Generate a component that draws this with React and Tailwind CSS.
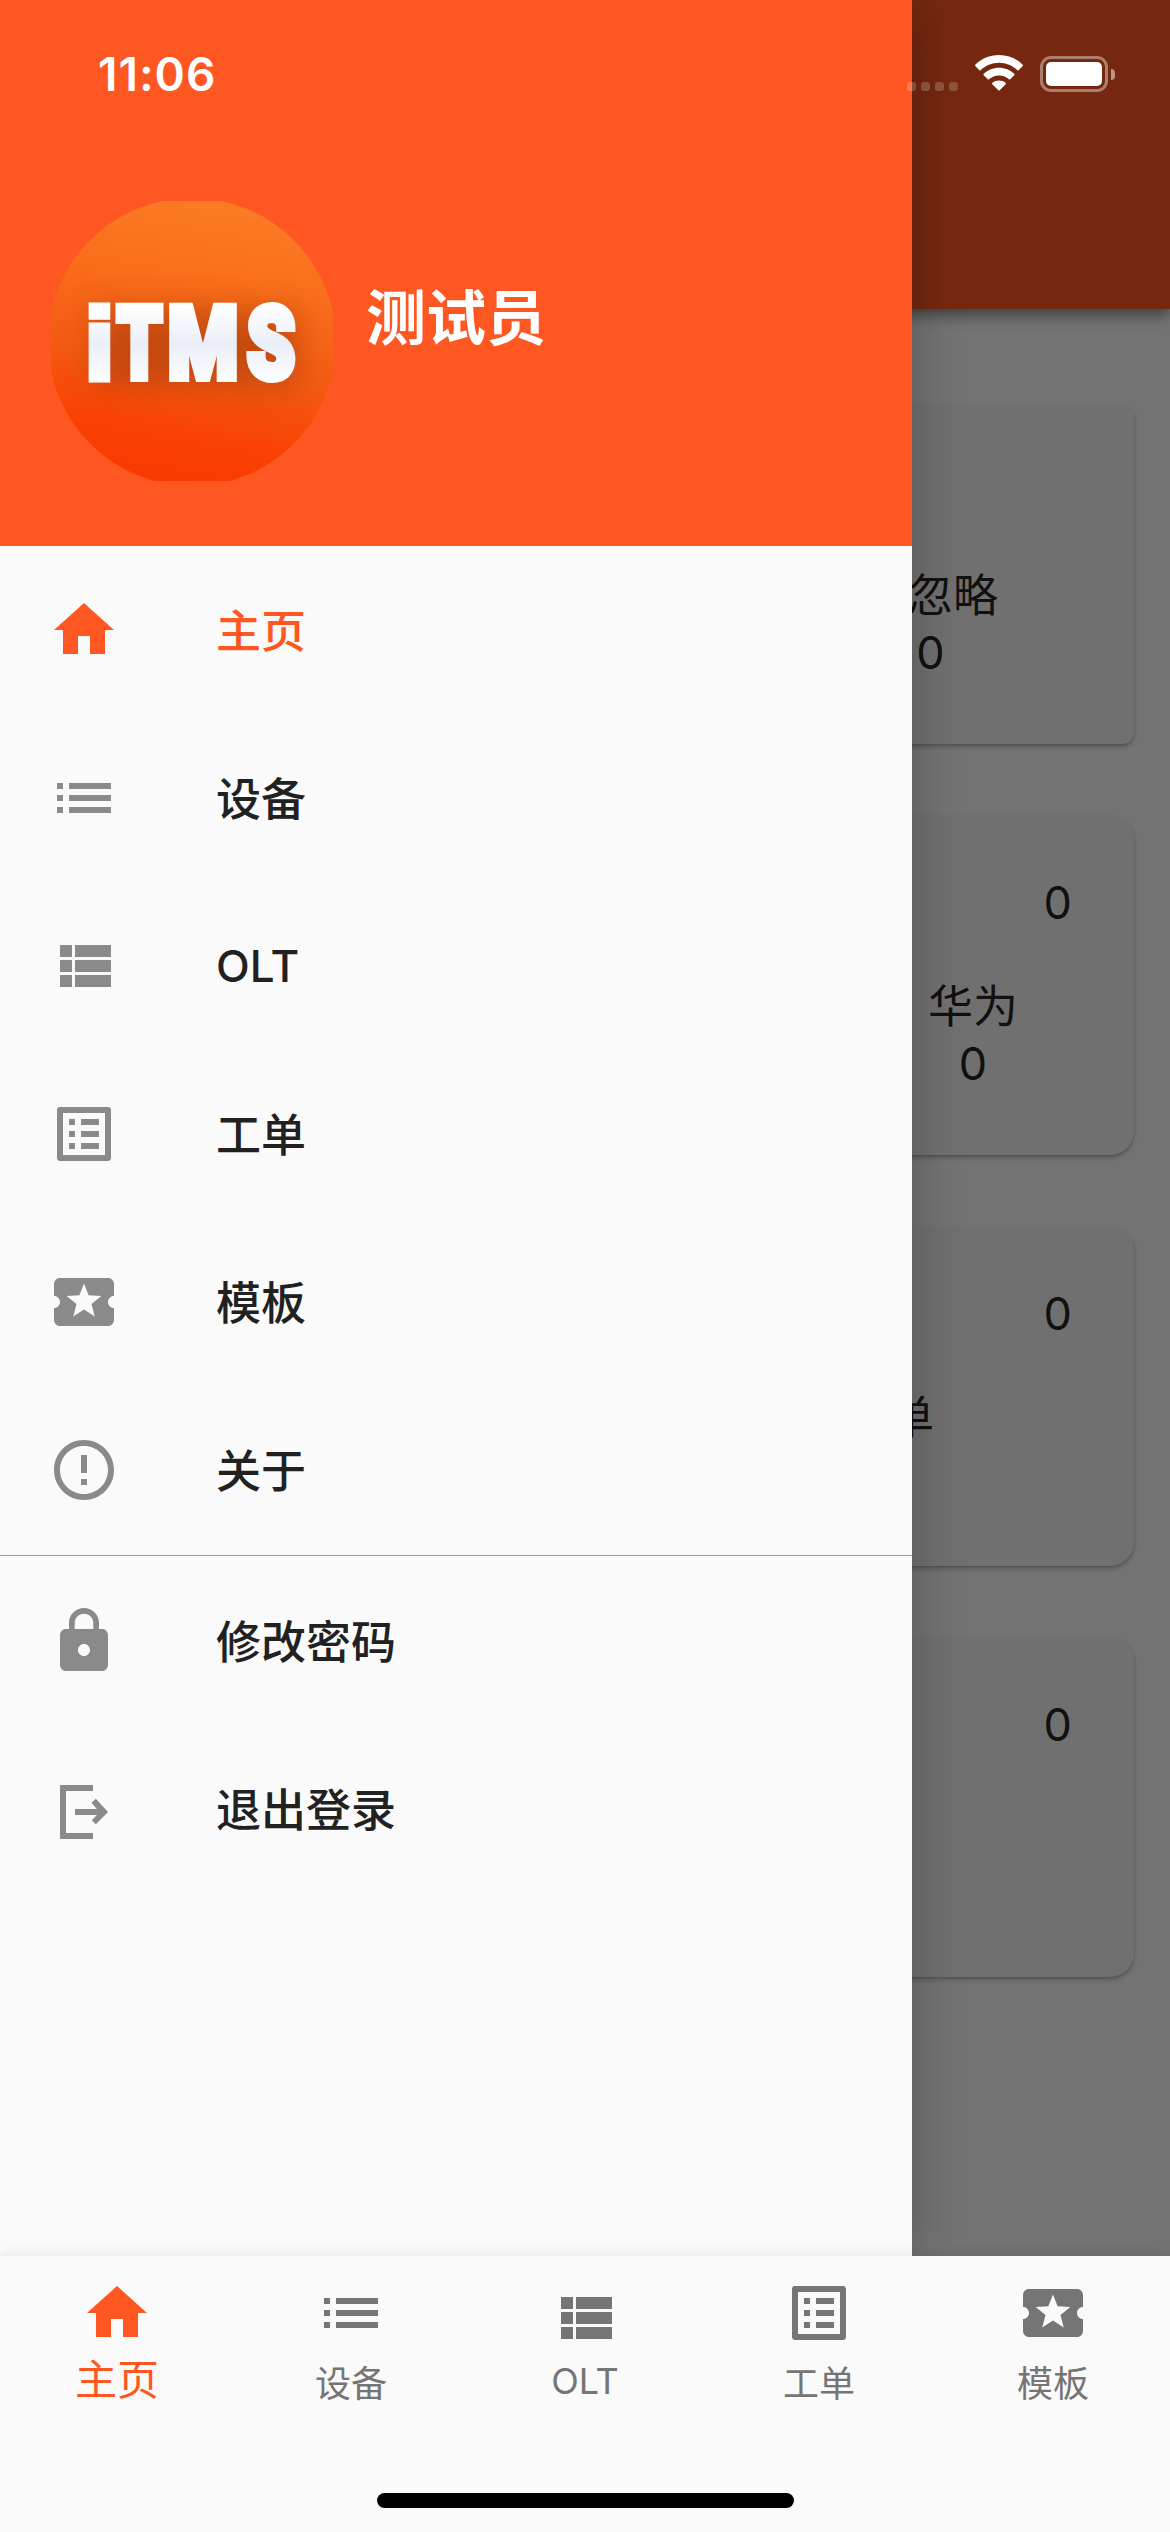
import clsx from 'clsx';

const ICONS = {
    home: 'M10 20v-6h4v6h5v-8h3L12 3 2 12h3v8z',
    list: 'M3 13h2v-2H3v2zm0 4h2v-2H3v2zm0-8h2V7H3v2zm4 4h14v-2H7v2zm0 4h14v-2H7v2zM7 7v2h14V7H7z',
    viewList: 'M4 14h4v-4H4v4zm0 5h4v-4H4v4zM4 9h4V5H4v4zm5 5h12v-4H9v4zm0 5h12v-4H9v4zM9 5v4h12V5H9z',
    listAlt: 'M19 5v14H5V5h14m1.1-2H3.9c-.5 0-.9.4-.9.9v16.2c0 .4.4.9.9.9h16.2c.4 0 .9-.5.9-.9V3.9c0-.5-.5-.9-.9-.9zM11 7h6v2h-6V7zm0 4h6v2h-6v-2zm0 4h6v2h-6zM7 7h2v2H7zm0 4h2v2H7zm0 4h2v2H7z',
    ticket: 'M20 12c0-1.1.9-2 2-2V6c0-1.1-.9-2-2-2H4c-1.1 0-1.99.9-1.99 2v4c1.1 0 1.99.9 1.99 2s-.89 2-2 2v4c0 1.1.9 2 2 2h16c1.1 0 2-.9 2-2v-4c-1.1 0-2-.9-2-2zm-4.42 4.8L12 14.5l-3.58 2.3 1.08-4.12-3.29-2.69 4.24-.25L12 5.8l1.54 3.95 4.24.25-3.29 2.69 1.09 4.11z',
    about: 'M11 15h2v2h-2v-2zm0-8h2v6h-2V7zm.99-5C6.47 2 2 6.48 2 12s4.47 10 9.99 10C17.52 22 22 17.52 22 12S17.52 2 11.99 2zM12 20c-4.42 0-8-3.58-8-8s3.58-8 8-8 8 3.58 8 8-3.58 8-8 8z',
    lock: 'M18 8h-1V6c0-2.76-2.24-5-5-5S7 3.24 7 6v2H6c-1.1 0-2 .9-2 2v10c0 1.1.9 2 2 2h12c1.1 0 2-.9 2-2V10c0-1.1-.9-2-2-2zm-6 9c-1.1 0-2-.9-2-2s.9-2 2-2 2 .9 2 2-.9 2-2 2zm3.1-9H8.9V6c0-1.71 1.39-3.1 3.1-3.1 1.71 0 3.1 1.39 3.1 3.1v2z',
    exit: 'M4 4h11v2H6v14h9v2H4zM9 12h7.3l-1.8-2.05L15.95 8.6 20 13l-4.05 4.1-1.35-1.35L16.3 14H9z',
};

const MENU = [
    { icon: 'home', label: '主页', active: true },
    { icon: 'list', label: '设备' },
    { icon: 'viewList', label: 'OLT', latin: true },
    { icon: 'listAlt', label: '工单' },
    { icon: 'ticket', label: '模板' },
    { icon: 'about', label: '关于' },
];

const ACCOUNT_MENU = [
    { icon: 'lock', label: '修改密码' },
    { icon: 'exit', label: '退出登录' },
];

const TABS = MENU.slice(0, 5);

function Icon({ name, className }) {
    return (
        <svg viewBox="0 0 24 24" fill="currentColor" className={clsx('size-18 shrink-0', className)}>
            <path d={ICONS[name]} />
        </svg>
    );
}

function StatusBar() {
    return (
        <div className="absolute inset-x-0 top-0 z-30 flex h-[141px] items-start justify-between pr-[55px] pl-[98px] text-white">
            <span className="mt-[46px] text-[46px] leading-[56px] font-semibold tracking-[1px]">11:06</span>
            <div className="mt-[55px] flex items-start">
                <div className="mt-[27px] mr-[17px] flex gap-[5px]">
                    {[0, 1, 2, 3].map((i) => (
                        <span key={i} className="size-[9px] rounded-[3px] bg-white/20" />
                    ))}
                </div>
                <svg width="48" height="36" viewBox="0 0 48 36" fill="white">
                    <path d="M24 0C33.3 0 41.7 3.7 47.7 9.7c.4.4.4 1 0 1.4L43.6 15.2c-.3.3-.8.3-1.2 0C37.6 10.6 31.2 7.7 24 7.7S10.4 10.6 5.6 15.2c-.4.3-.9.3-1.2 0L.3 11.1c-.4-.4-.4-1 0-1.4C6.3 3.7 14.7 0 24 0z" />
                    <path d="M24 12.8c5.9 0 11.3 2.3 15.3 6 .4.4.4 1 0 1.4L35.2 24.3c-.3.3-.8.3-1.2 0-2.6-2.4-6.1-3.9-10-3.9s-7.4 1.500-10 3.900c-.4.3-.9.3-1.200 0L8.700 20.200c-.4-.4-.4-1 0-1.400 4-3.700 9.400-6 15.300-6z" />
                    <path d="M24 25.4c2.5 0 4.8.9 6.6 2.3.5.4.5 1 .1 1.5L24.7 35.3c-.4.4-1 .4-1.4 0L17.3 29.2c-.4-.5-.4-1.1.1-1.5 1.8-1.4 4.1-2.3 6.6-2.3z" />
                </svg>
                <div className="mt-px ml-[17px] flex items-center gap-[3px]">
                    <div className="h-9 w-[68px] rounded-[11px] border-[3px] border-white/40 p-[3px]">
                        <div className="h-full rounded-[5px] bg-white" />
                    </div>
                    <span className="h-[11px] w-1 rounded-r-full bg-white/50" />
                </div>
            </div>
        </div>
    );
}

function Stat({ label, value, className }) {
    return (
        <div className={clsx('flex flex-col items-center', className)}>
            <span className="h-[57px]">{label}</span>
            <span>{value}</span>
        </div>
    );
}

function Card({ total, className, children }) {
    return (
        <section
            className={clsx(
                'flex h-[340px] flex-col items-end bg-[#f4f4f4] pt-[59px] shadow-[0_3px_4px_rgba(0,0,0,0.22),0_1px_2px_rgba(0,0,0,0.1)]',
                className,
            )}
        >
            <div className="mr-[62px] h-[104px]">{total}</div>
            {children}
        </section>
    );
}

// Dashboard that stays dimmed while the drawer is open
function Dashboard() {
    return (
        <div className="flex flex-1 flex-col bg-[#fafafa] text-[45px] leading-[58px] text-black/87">
            <header className="relative h-[309px] shrink-0 bg-[#ff5722] shadow-[0_6px_14px_rgba(0,0,0,0.45)]" />
            <main className="mt-[95px] flex flex-col gap-[71px] px-9">
                <Card className="rounded-xl">
                    <Stat label="已忽略" value="0" className="mr-[136px]" />
                </Card>
                <Card total="0" className="rounded-3xl">
                    <Stat label="华为" value="0" className="mr-[116px]" />
                </Card>
                <Card total="0" className="rounded-3xl">
                    <Stat label="工单" className="mr-[200px]" />
                </Card>
                <Card total="0" className="rounded-3xl" />
            </main>
        </div>
    );
}

function Logo() {
    return (
        <svg width="288" height="288" viewBox="0 0 288 288" className="shrink-0">
            <defs>
                <linearGradient id="logoBg" x1="0.6" y1="0" x2="0.42" y2="1">
                    <stop offset="0" stopColor="#fb7b24" />
                    <stop offset="0.25" stopColor="#fa701c" />
                    <stop offset="0.6" stopColor="#f35a12" />
                    <stop offset="0.82" stopColor="#f94305" />
                    <stop offset="1" stopColor="#fa3900" />
                </linearGradient>
                <linearGradient id="logoText" x1="0" y1="0" x2="0" y2="1">
                    <stop offset="0.2" stopColor="#fff" />
                    <stop offset="0.5" stopColor="#eaeef7" />
                    <stop offset="0.85" stopColor="#fff" />
                </linearGradient>
                <clipPath id="logoClip">
                    <circle cx="144" cy="144" r="144" />
                </clipPath>
                <filter id="logoGlow" x="-30%" y="-60%" width="160%" height="220%">
                    <feGaussianBlur stdDeviation="15" />
                </filter>
            </defs>
            <g clipPath="url(#logoClip)">
                <rect x="3" y="3" width="282" height="280" fill="url(#logoBg)" />
                <rect x="46" y="112" width="204" height="76" fill="#a83c0c" opacity="0.6" filter="url(#logoGlow)" />
            </g>
            <g
                fill="url(#logoText)"
                stroke="url(#logoText)"
                strokeWidth="8"
                className="font-['Roboto',sans-serif] text-[101px] font-black"
            >
                <text
                    x="37"
                    y="181"
                    textLength="29"
                    lengthAdjust="spacingAndGlyphs"
                    strokeWidth="7"
                    className="font-['Liberation_Sans',sans-serif] text-[101px] font-bold"
                >
                    i
                </text>
                <text x="69" y="180" textLength="45" lengthAdjust="spacingAndGlyphs">T</text>
                <text x="120" y="180" textLength="70" lengthAdjust="spacingAndGlyphs">M</text>
                <text x="199" y="180" textLength="48" lengthAdjust="spacingAndGlyphs">S</text>
            </g>
        </svg>
    );
}

function MenuItem({ icon, label, active, latin }) {
    return (
        <li className="flex h-[168px] items-center px-12">
            <Icon name={icon} className={active ? 'text-[#ff5722]' : 'text-[#8a8a8a]'} />
            <span
                className={clsx(
                    'ml-24 leading-[60px] font-medium',
                    latin ? '-mt-px text-[44px]' : 'pt-[3px] text-[45px]',
                    active ? 'text-[#ff5722]' : 'text-[#212121]',
                )}
            >
                {label}
            </span>
        </li>
    );
}

function Drawer() {
    return (
        <aside className="absolute top-0 left-0 z-10 flex h-[2256px] w-[912px] flex-col bg-[#fafafa] shadow-[0_0_48px_rgba(0,0,0,0.25)]">
            <div className="flex h-[546px] shrink-0 items-start bg-[#ff5722] pt-[198px] pl-12">
                <Logo />
                <h1 className="mt-[78px] ml-[30px] text-[60px] leading-[84px] font-bold text-white">测试员</h1>
            </div>
            <ul>
                {MENU.map((item) => (
                    <MenuItem key={item.label} {...item} />
                ))}
            </ul>
            <div className="my-px h-px shrink-0 bg-[#999]" />
            <ul>
                {ACCOUNT_MENU.map((item) => (
                    <MenuItem key={item.label} {...item} />
                ))}
            </ul>
        </aside>
    );
}

function TabBar() {
    return (
        <nav className="relative z-20 flex h-[276px] shrink-0 flex-col bg-[#fafafa] shadow-[0_-2px_12px_rgba(0,0,0,0.08)]">
            <div className="grid grid-cols-5 pt-[21px]">
                {TABS.map(({ icon, label, active, latin }) => (
                    <div
                        key={label}
                        className={clsx(
                            'flex flex-col items-center',
                            active ? 'text-[#ff5722]' : 'text-[#757575]',
                            latin && 'pt-[5px]',
                        )}
                    >
                        <Icon name={icon} />
                        <span
                            className={clsx(
                                'leading-[60px]',
                                active ? 'mt-px text-[42px]' : 'text-[36px]',
                                !active && (latin ? '-mt-[3px]' : 'mt-[5px]'),
                            )}
                        >
                            {label}
                        </span>
                    </div>
                ))}
            </div>
            <div className="mx-auto mt-auto mb-6 h-[15px] w-[417px] rounded-full bg-black" />
        </nav>
    );
}

export default function App() {
    return (
        <div className="relative flex h-[2532px] w-[1170px] flex-col overflow-hidden font-['Inter','Noto_Sans_CJK_SC',sans-serif]">
            <Dashboard />
            {/* Scrim */}
            <div className="absolute inset-0 bg-black/54" />
            <Drawer />
            <TabBar />
            <StatusBar />
        </div>
    );
}
